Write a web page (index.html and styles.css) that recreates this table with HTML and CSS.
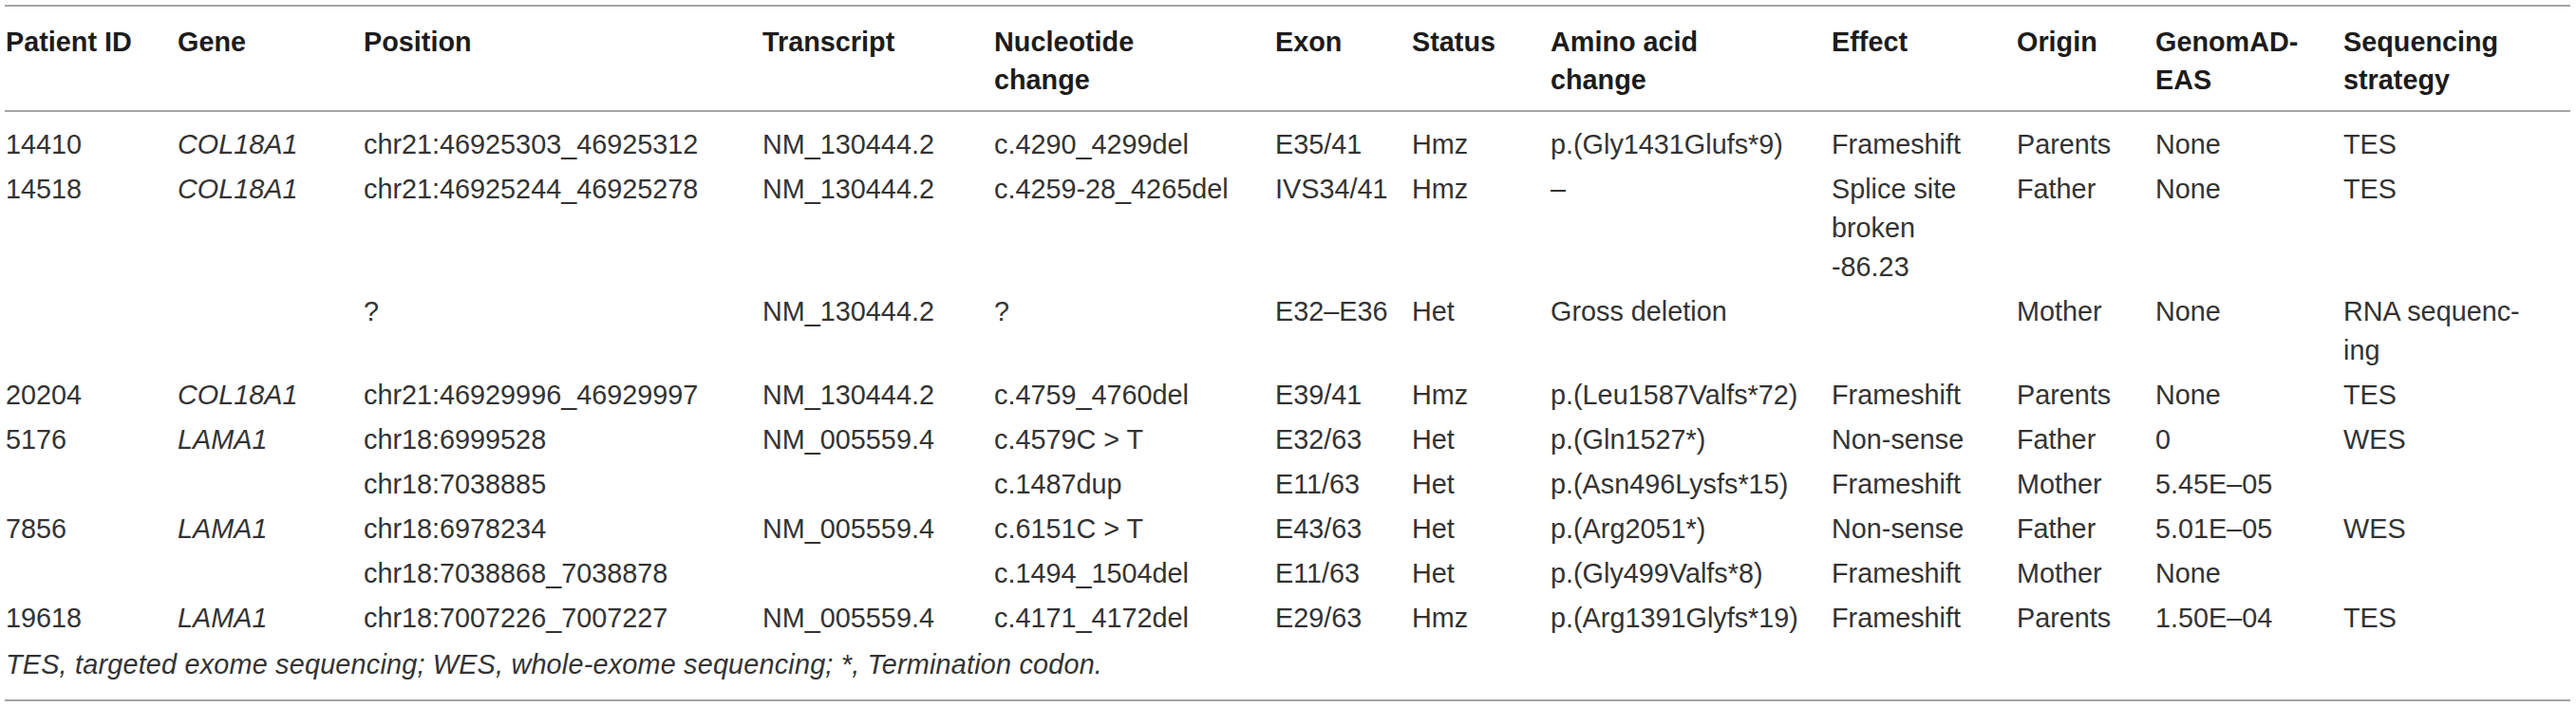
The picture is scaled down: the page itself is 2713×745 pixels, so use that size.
FILE: index.html
```html
<!DOCTYPE html>
<html lang="en">
<head>
<meta charset="utf-8">
<title>Variants table</title>
<link rel="stylesheet" href="styles.css">
</head>
<body>
<table class="vt">
  <colgroup>
    <col class="c1"><col class="c2"><col class="c3"><col class="c4"><col class="c5"><col class="c6">
    <col class="c7"><col class="c8"><col class="c9"><col class="c10"><col class="c11"><col class="c12">
  </colgroup>
  <thead>
    <tr>
      <th>Patient ID</th>
      <th>Gene</th>
      <th>Position</th>
      <th>Transcript</th>
      <th>Nucleotide<br>change</th>
      <th>Exon</th>
      <th>Status</th>
      <th>Amino acid<br>change</th>
      <th>Effect</th>
      <th>Origin</th>
      <th>GenomAD-<br>EAS</th>
      <th>Sequencing<br>strategy</th>
    </tr>
  </thead>
  <tbody>
    <tr class="first">
      <td>14410</td><td class="gene">COL18A1</td><td>chr21:46925303_46925312</td><td>NM_130444.2</td><td>c.4290_4299del</td><td>E35/41</td><td>Hmz</td><td>p.(Gly1431Glufs*9)</td><td>Frameshift</td><td>Parents</td><td>None</td><td>TES</td>
    </tr>
    <tr>
      <td>14518</td><td class="gene">COL18A1</td><td>chr21:46925244_46925278</td><td>NM_130444.2</td><td>c.4259-28_4265del</td><td>IVS34/41</td><td>Hmz</td><td>–</td><td>Splice site<br>broken<br>-86.23</td><td>Father</td><td>None</td><td>TES</td>
    </tr>
    <tr>
      <td></td><td></td><td>?</td><td>NM_130444.2</td><td>?</td><td>E32–E36</td><td>Het</td><td>Gross deletion</td><td></td><td>Mother</td><td>None</td><td>RNA sequenc-<br>ing</td>
    </tr>
    <tr>
      <td>20204</td><td class="gene">COL18A1</td><td>chr21:46929996_46929997</td><td>NM_130444.2</td><td>c.4759_4760del</td><td>E39/41</td><td>Hmz</td><td>p.(Leu1587Valfs*72)</td><td>Frameshift</td><td>Parents</td><td>None</td><td>TES</td>
    </tr>
    <tr>
      <td>5176</td><td class="gene">LAMA1</td><td>chr18:6999528</td><td>NM_005559.4</td><td>c.4579C &gt; T</td><td>E32/63</td><td>Het</td><td>p.(Gln1527*)</td><td>Non-sense</td><td>Father</td><td>0</td><td>WES</td>
    </tr>
    <tr>
      <td></td><td></td><td>chr18:7038885</td><td></td><td>c.1487dup</td><td>E11/63</td><td>Het</td><td>p.(Asn496Lysfs*15)</td><td>Frameshift</td><td>Mother</td><td>5.45E–05</td><td></td>
    </tr>
    <tr>
      <td>7856</td><td class="gene">LAMA1</td><td>chr18:6978234</td><td>NM_005559.4</td><td>c.6151C &gt; T</td><td>E43/63</td><td>Het</td><td>p.(Arg2051*)</td><td>Non-sense</td><td>Father</td><td>5.01E–05</td><td>WES</td>
    </tr>
    <tr>
      <td></td><td></td><td>chr18:7038868_7038878</td><td></td><td>c.1494_1504del</td><td>E11/63</td><td>Het</td><td>p.(Gly499Valfs*8)</td><td>Frameshift</td><td>Mother</td><td>None</td><td></td>
    </tr>
    <tr>
      <td>19618</td><td class="gene">LAMA1</td><td>chr18:7007226_7007227</td><td>NM_005559.4</td><td>c.4171_4172del</td><td>E29/63</td><td>Hmz</td><td>p.(Arg1391Glyfs*19)</td><td>Frameshift</td><td>Parents</td><td>1.50E–04</td><td>TES</td>
    </tr>
  </tbody>
  <tfoot>
    <tr>
      <td colspan="12" class="note">TES, targeted exome sequencing; WES, whole-exome sequencing; *, Termination codon.</td>
    </tr>
  </tfoot>
</table>
</body>
</html>
```
FILE: styles.css
```css
html, body {
  margin: 0;
  padding: 0;
  background: #ffffff;
}

body {
  padding: 5px 0 0 5px;
}

.vt {
  width: 2702px;
  table-layout: fixed;
  border-collapse: collapse;
  font-family: "Liberation Sans", Arial, sans-serif;
  font-size: 28.8px;
  color: #333333;
  border-top: 2px solid #a4a4a4;
  border-bottom: 2px solid #a4a4a4;
}

.c1 { width: 181px; }
.c2 { width: 196px; }
.c3 { width: 420px; }
.c4 { width: 244px; }
.c5 { width: 296px; }
.c6 { width: 144px; }
.c7 { width: 146px; }
.c8 { width: 296px; }
.c9 { width: 195px; }
.c10 { width: 146px; }
.c11 { width: 198px; }
.c12 { width: 240px; }

.vt th {
  text-align: left;
  vertical-align: top;
  font-weight: bold;
  color: #1c1c1c;
  line-height: 40px;
  padding: 17px 0 12px 1px;
  border-bottom: 2px solid #a4a4a4;
  white-space: nowrap;
}

.vt td {
  text-align: left;
  vertical-align: top;
  line-height: 41px;
  padding: 3px 0 3px 1px;
  white-space: nowrap;
}

.vt tbody tr.first td {
  padding-top: 14px;
}

.vt td.gene {
  font-style: italic;
}

.vt td.note {
  font-style: italic;
  letter-spacing: 0.2px;
  padding: 5px 0 16px 1px;
}
```
